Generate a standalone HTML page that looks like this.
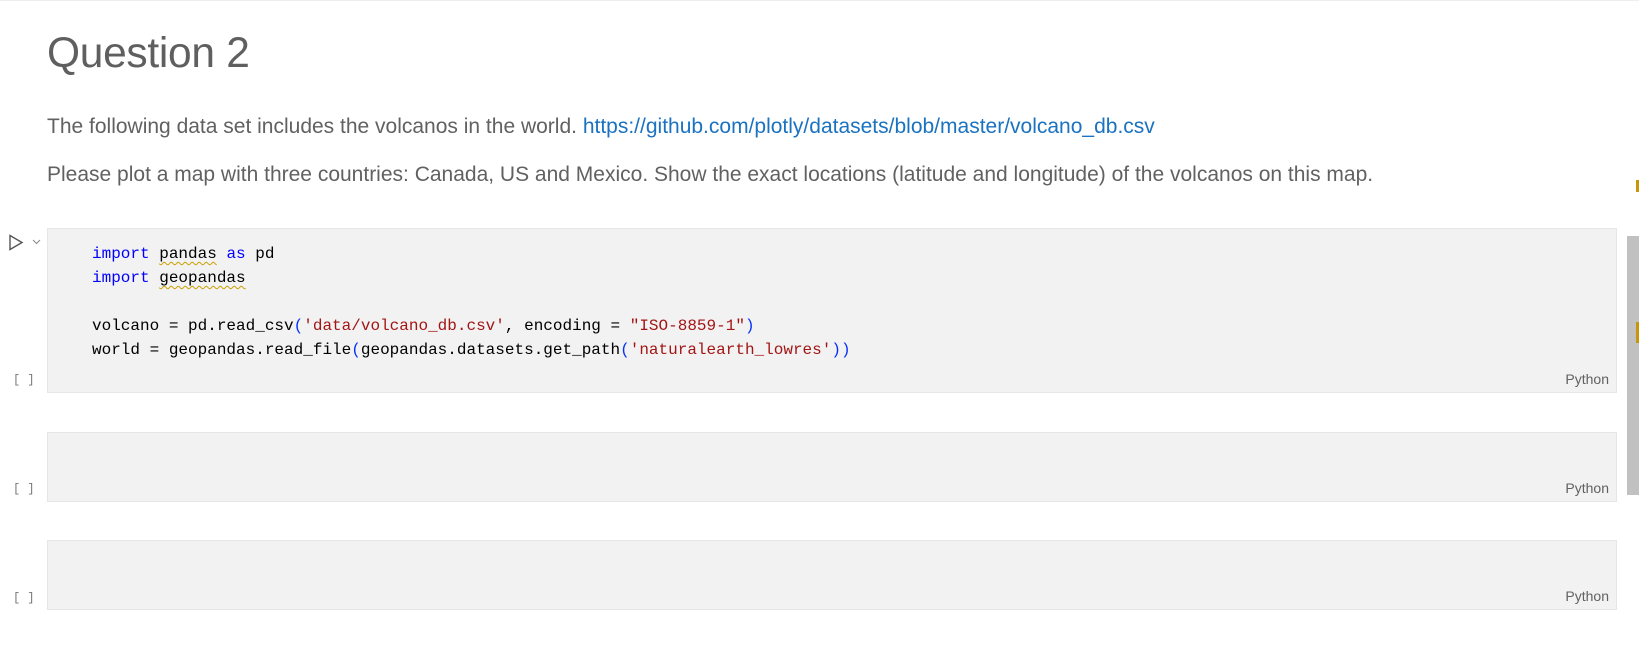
<!DOCTYPE html>
<html><head><meta charset="utf-8"><style>
body{margin:0;width:1639px;height:647px;background:#fff;position:relative;overflow:hidden;font-family:"Liberation Sans",sans-serif;}
.topline{position:absolute;left:0;top:0;width:1639px;height:1px;background:#eee;}
h1{position:absolute;left:47px;top:30px;margin:0;font-weight:normal;font-size:42.5px;line-height:1.117;color:#5f5f5f;letter-spacing:-0.3px;}
.p{position:absolute;left:47px;font-size:21px;line-height:1.117;color:#616161;white-space:nowrap;}
.p a{color:#1a72c0;text-decoration:none;}
.cell{position:absolute;left:47px;width:1570px;background:#f2f2f2;border:1px solid #e6e6e6;box-sizing:border-box;}
.py{position:absolute;right:7px;bottom:5px;font-size:14px;color:#616161;}
.br{position:absolute;left:13px;font-family:"Liberation Mono",monospace;font-size:12px;color:#777;}
pre{position:absolute;left:44px;top:13px;margin:0;font-family:"Liberation Mono",monospace;font-size:16px;line-height:24px;color:#000;}
.k{color:#0000ff}.s{color:#a31515}.b{color:#0431fa}
.sq{text-decoration:underline wavy #c9a000;text-decoration-thickness:1px;text-underline-offset:3px;}
.sb{position:absolute;left:1627px;top:236px;width:12px;height:259px;background:#c1c1c1;}
.m{position:absolute;left:1636px;width:3px;background:#c8960c;}
</style></head><body>
<div class="topline"></div>
<h1>Question 2</h1>
<div class="p" style="top:115px">The following data set includes the volcanos in the world. <a>https://github.com/plotly/datasets/blob/master/volcano_db.csv</a></div>
<div class="p" style="top:163px">Please plot a map with three countries: Canada, US and Mexico. Show the exact locations (latitude and longitude) of the volcanos on this map.</div>

<svg style="position:absolute;left:8px;top:234px" width="36" height="18" viewBox="0 0 36 18"><path d="M2 1.5 L14 8.5 L2 15.5 Z" fill="none" stroke="#555" stroke-width="1.4"/><path d="M25 6 L28.5 9.5 L32 6" fill="none" stroke="#888" stroke-width="1"/></svg>

<div class="cell" style="top:228px;height:165px">
<pre><span class="k">import</span> <span class="sq">pandas</span> <span class="k">as</span> pd
<span class="k">import</span> <span class="sq">geopandas</span>

volcano = pd.read_csv<span class="b">(</span><span class="s">'data/volcano_db.csv'</span>, encoding = <span class="s">"ISO-8859-1"</span><span class="b">)</span>
world = geopandas.read_file<span class="b">(</span>geopandas.datasets.get_path<span class="b">(</span><span class="s">'naturalearth_lowres'</span><span class="b">))</span></pre>
<div class="py">Python</div></div>
<div class="br" style="top:373px">[ ]</div>

<div class="cell" style="top:432px;height:70px"><div class="py">Python</div></div>
<div class="br" style="top:482px">[ ]</div>
<div class="cell" style="top:540px;height:70px"><div class="py">Python</div></div>
<div class="br" style="top:591px">[ ]</div>

<div class="sb"></div>
<div class="m" style="top:180px;height:12px"></div>
<div class="m" style="top:322px;height:21px"></div>
</body></html>
